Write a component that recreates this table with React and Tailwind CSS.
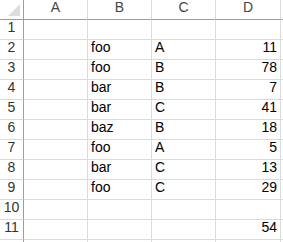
import React from 'react';

const rows = [
  ['', '', ''],
  ['foo', 'A', '11'],
  ['foo', 'B', '78'],
  ['bar', 'B', '7'],
  ['bar', 'C', '41'],
  ['baz', 'B', '18'],
  ['foo', 'A', '5'],
  ['bar', 'C', '13'],
  ['foo', 'C', '29'],
  ['', '', ''],
  ['', '', '54'],
];

const cols = ['A', 'B', 'C', 'D'];

const App = () => {
  return (
    <div
      className="w-[283px] h-[242px] overflow-hidden bg-white text-[#000] text-[14px]"
      style={{ fontFamily: '"Liberation Sans", Arial, sans-serif' }}
    >
      <div className="grid grid-cols-[24px_64px_64px_64px_65px_1fr]">
        {/* header row */}
        <div className="h-5 border-r border-b border-[#9e9e9e] relative">
          <div className="absolute right-[3px] bottom-[3px] w-0 h-0 border-l-[12px] border-l-transparent border-b-[12px] border-b-[#dcdcdc]" />
        </div>
        {cols.map((c) => (
          <div
            key={c}
            className="h-5 border-r border-b border-r-[#dadada] border-b-[#9e9e9e] flex items-end justify-center pb-[1px] text-[#444]"
          >
            {c}
          </div>
        ))}
        <div className="h-5 border-b border-[#9e9e9e]" />

        {rows.map((r, i) => (
          <React.Fragment key={i}>
            <div className="h-5 border-r border-b border-r-[#9e9e9e] border-b-[#dadada] flex items-end justify-center pb-[1px] text-[#333]">
              {i + 1}
            </div>
            <div className="h-5 border-r border-b border-[#dadada]" />
            <div className="h-5 border-r border-b border-[#dadada] flex items-end pl-[3px] pb-[1px]">{r[0]}</div>
            <div className="h-5 border-r border-b border-[#dadada] flex items-end pl-[3px] pb-[1px]">{r[1]}</div>
            <div className="h-5 border-r border-b border-[#dadada] flex items-end justify-end pr-[3px] pb-[1px]">{r[2]}</div>
            <div className="h-5 border-b border-[#dadada]" />
          </React.Fragment>
        ))}

        <div className="h-[2px] border-r border-[#9e9e9e]" />
        <div className="h-[2px] border-r border-[#dadada]" />
        <div className="h-[2px] border-r border-[#dadada]" />
        <div className="h-[2px] border-r border-[#dadada]" />
        <div className="h-[2px] border-r border-[#dadada]" />
        <div className="h-[2px]" />
      </div>
    </div>
  );
};

export default App;
